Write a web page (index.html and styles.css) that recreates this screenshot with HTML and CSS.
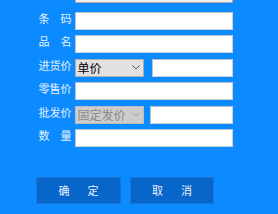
FILE: index.html
```html
<!DOCTYPE html>
<html>
<head>
<meta charset="utf-8">
<link rel="stylesheet" href="styles.css">
</head>
<body>
<div class="form">
  <div class="row top">
    <span class="label"></span>
    <input class="field full disabled" type="text" disabled>
  </div>
  <div class="row">
    <span class="label">条码</span>
    <input class="field full" type="text">
  </div>
  <div class="row">
    <span class="label">品名</span>
    <input class="field full" type="text">
  </div>
  <div class="row">
    <span class="label">进货价</span>
    <div class="select"><span class="val">单价</span><svg class="chev" width="8" height="5" viewBox="0 0 8 5"><path d="M0.5 0.5 L4 4 L7.5 0.5" fill="none" stroke="#555" stroke-width="1"/></svg></div>
    <input class="field part a" type="text">
  </div>
  <div class="row">
    <span class="label">零售价</span>
    <input class="field full" type="text">
  </div>
  <div class="row">
    <span class="label">批发价</span>
    <div class="select off"><span class="val">固定发价</span><svg class="chev" width="8" height="5" viewBox="0 0 8 5"><path d="M0.5 0.5 L4 4 L7.5 0.5" fill="none" stroke="#a5a5a5" stroke-width="1"/></svg></div>
    <input class="field part b" type="text">
  </div>
  <div class="row">
    <span class="label">数量</span>
    <input class="field full" type="text">
  </div>
  <div class="buttons">
    <div class="btn"><span>确</span><span>定</span></div>
    <div class="btn"><span>取</span><span>消</span></div>
  </div>
</div>
</body>
</html>
```
FILE: styles.css
```css
html, body {
  margin: 0;
  padding: 0;
  background: #0b8bff;
  width: 278px;
  height: 214px;
  overflow: hidden;
  font-family: "Noto Sans CJK SC", "Noto Sans", sans-serif;
}
.form {
  display: flex;
  flex-direction: column;
  gap: 5.4px;
}
.row {
  display: flex;
  align-items: flex-start;
  height: 18px;
}
.row.top {
  margin-top: -15px;
  margin-bottom: 3.6px;
}
.label {
  flex: 0 0 auto;
  width: 33px;
  margin-left: 38.5px;
  margin-right: 3.5px;
  font-size: 11px;
  line-height: 12px;
  color: #e6f0ff;
  white-space: nowrap;
  text-align: justify;
  text-align-last: justify;
}
.field {
  flex: 0 0 auto;
  box-sizing: border-box;
  height: 18px;
  margin: 0;
  padding: 0;
  background: #fff;
  border: 1px solid #c9d4de;
  border-top-color: #b8c2cc;
  border-left-color: #b8c2cc;
  outline: none;
}
.field.full { width: 158px; }
.field.disabled { background: #f0f0f0; border-color: #a9a9a9; }
.field.part.a { width: 81px; margin-left: 8px; }
.field.part.b { width: 83px; margin-left: 6px; }
.select {
  flex: 0 0 auto;
  box-sizing: border-box;
  width: 69px;
  height: 18px;
  background: #e1e1e1;
  border: 1px solid #adadad;
  display: flex;
  align-items: center;
  padding: 0 3px 0 1.5px;
  font-size: 12px;
  line-height: 16px;
  color: #000;
}
.val {
  flex: 1 1 auto;
  white-space: nowrap;
}
.chev {
  flex: 0 0 auto;
  margin-left: 2px;
}
.select.off {
  background: #cccccc;
  border-color: #bdbdbd;
  color: #8a8a8a;
}
.buttons {
  display: flex;
  gap: 9px;
  margin-left: 36px;
  margin-top: 24.6px;
}
.btn {
  box-sizing: border-box;
  width: 85px;
  height: 27px;
  background: #0865c9;
  border: 1px solid #1a74d6;
  display: flex;
  align-items: center;
  justify-content: center;
  gap: 18px;
  font-size: 11px;
  color: #e8f0ff;
}
.btn + .btn { width: 84px; }
```
